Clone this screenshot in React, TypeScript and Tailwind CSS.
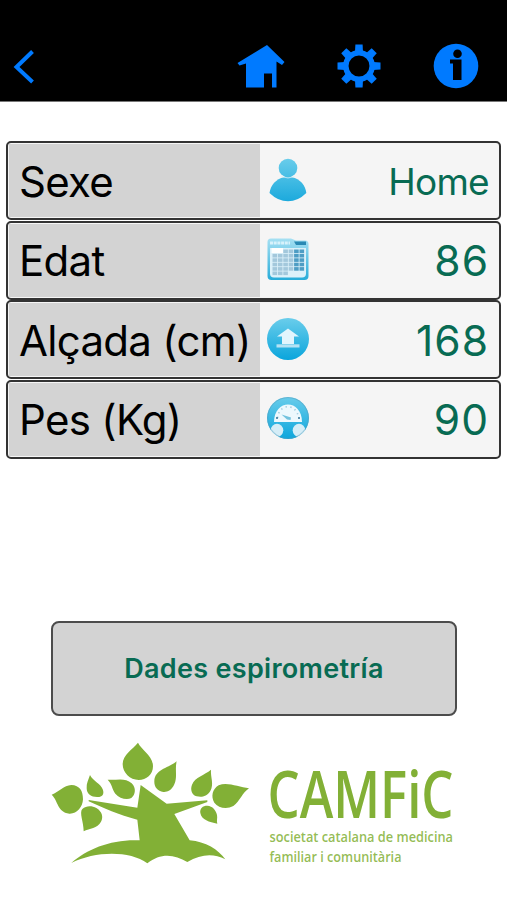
import type { ReactNode } from "react";

function BackIcon() {
  return (
    <svg width="24" height="36" viewBox="0 0 24 36" fill="none" stroke="#007aff" strokeWidth="4">
      <path d="M20.500 3.500 4.500 19l16 15" />
    </svg>
  );
}

function HouseIcon() {
  return (
    <svg width="48" height="44" viewBox="0 0 48 44" fill="#007aff">
      <path d="M30 1 47.500 18 45 21 39.500 17.500V43.500H35V29.500H27V43.500H9V19.500L2.500 21.500.500 19Z" />
    </svg>
  );
}

function GearIcon() {
  return (
    <svg width="44" height="44" viewBox="-22 -22 44 44" fill="#007aff">
      <circle r="13.200" fill="none" stroke="#007aff" strokeWidth="5.500" />
      {[0, 45, 90, 135, 180, 225, 270, 315].map((angle) => (
        <path key={angle} d="M-4-14-3.600-21.500H3.600L4-14Z" transform={`rotate(${angle})`} />
      ))}
    </svg>
  );
}

function InfoIcon() {
  return (
    <svg width="46" height="46" viewBox="0 0 46 46">
      <circle cx="23" cy="23" r="22.300" fill="#007aff" />
      <circle cx="24.500" cy="10.800" r="4.300" />
      <path d="M17 16.500h11.500v20.500h-8.500V20.500h-3Z" />
    </svg>
  );
}

function Shade({ id }: { id: string }) {
  return (
    <defs>
      <linearGradient id={id} x1="0" y1="0" x2="0" y2="1">
        <stop offset="0" stopColor="#6acdeb" />
        <stop offset="1" stopColor="#0aa5dc" />
      </linearGradient>
    </defs>
  );
}

function PersonIcon() {
  return (
    <svg width="42" height="44" viewBox="0 0 42 44">
      <defs>
        <linearGradient id="person" gradientUnits="userSpaceOnUse" x1="0" y1="0" x2="0" y2="44">
          <stop offset="0" stopColor="#6acdeb" />
          <stop offset="1" stopColor="#1ba9dc" />
        </linearGradient>
      </defs>
      <g fill="url(#person)">
        <circle cx="21" cy="10" r="9.300" />
        <path d="M17 19.200H25C33 21 38.500 27 39.300 35Q31 43.300 21 43.300T2.500 35C3.500 27 9 21 17 19.200Z" />
      </g>
      <path d="M14.500 18.500Q21 21.500 27.500 18.500" stroke="#d9f1f9" strokeWidth=".7" fill="none" />
    </svg>
  );
}

function CalendarIcon() {
  const cells: ReactNode[] = [];
  for (let row = 0; row < 6; row++) {
    for (let col = 0; col < 6; col++) {
      if ((row === 0 && col < 2) || (row === 5 && col > 2)) continue;
      cells.push(
        <rect
          key={`${row}-${col}`}
          x={5.5 + col * 5.4}
          y={12.5 + row * 4.4}
          width="4.600"
          height="3.600"
          fill={col > 3 ? "#4e9dc4" : "#a3c8dc"}
        />,
      );
    }
  }
  return (
    <svg width="42" height="44" viewBox="0 0 42 44">
      <defs>
        <linearGradient id="calendar" x1="0" y1="0" x2="0" y2="1">
          <stop offset="0" stopColor="#a6e0f3" />
          <stop offset="1" stopColor="#27acd9" />
        </linearGradient>
      </defs>
      <path d="M4 1.500H24L29 3.500H38Q41.500 3.500 41.500 7V39Q41.500 43 37.500 43H4.500Q.500 43 .500 39V5Q.500 1.500 4 1.500Z" fill="url(#calendar)" />
      <path d="M3 11H39V36.500Q39 40.500 35 40.500H7Q3 40.500 3 36.500Z" fill="#dcf1fa" />
      <path d="M4.500 11H16V16H4.500Z" fill="#fff" />
      <path d="M3 6H23" stroke="#d8f2fb" strokeWidth="3" strokeDasharray="3 .7" />
      <path d="M27 4.500H39V8H29Z" fill="#2989b4" />
      {cells}
    </svg>
  );
}

function HeightIcon() {
  return (
    <svg width="42" height="44" viewBox="0 0 42 44">
      <Shade id="height" />
      <circle cx="21" cy="22" r="21" fill="url(#height)" />
      <path d="M21 11.500 32 19.500H27V27H15V19.500H10Z" fill="#e2f5fd" />
      <path d="M9.500 27.300H32.500V30.500H9.500Z" fill="#b5e2f4" />
    </svg>
  );
}

function ScaleIcon() {
  return (
    <svg width="42" height="44" viewBox="0 0 42 44">
      <Shade id="scale" />
      <clipPath id="scale-disc"><circle cx="21" cy="22" r="21" /></clipPath>
      <g clipPath="url(#scale-disc)">
        <rect width="42" height="44" fill="url(#scale)" />
        <path d="M7 26C7 2.500 35 2.500 35 26Z" fill="#edf8fd" />
        <path d="M10.500 22C12 7 30 7 31.500 22" fill="none" stroke="#9bc8dc" strokeWidth="1.600" strokeDasharray="1.300 3.500" />
        <path d="M14.500 18.500 24 21.500 23.500 24 20 23.500Z" fill="#72c2de" />
        <circle cx="10" cy="22" r="1.100" fill="#3a799d" />
        <circle cx="32" cy="22" r="1.100" fill="#3a799d" />
        <ellipse cx="10" cy="34.300" rx="6.300" ry="6.500" fill="#d5edf7" />
        <ellipse cx="32" cy="34.300" rx="6.300" ry="6.500" fill="#d5edf7" />
      </g>
      <circle cx="21" cy="22" r="20.400" fill="none" stroke="#579ab8" strokeOpacity=".5" />
    </svg>
  );
}

type Field = { label: string; value: string; icon: ReactNode; valueClass: string };

const numberClass = "mr-[-1px] pt-[2px] text-[42.500px] tracking-[1px]";

const fields: Field[] = [
  { label: "Sexe", value: "Home", icon: <PersonIcon />, valueClass: "mr-[-1px] pt-[2px] text-[37px] tracking-[-0.7px]" },
  { label: "Edat", value: "86", icon: <CalendarIcon />, valueClass: numberClass },
  { label: "Alçada (cm)", value: "168", icon: <HeightIcon />, valueClass: numberClass },
  { label: "Pes (Kg)", value: "90", icon: <ScaleIcon />, valueClass: numberClass },
];

function FieldRow({ field }: { field: Field }) {
  return (
    <div className="flex h-[79px] w-[495px] rounded-[5px] border-2 border-[#333] bg-[#f5f5f5] p-px">
      <div className="flex w-[251px] shrink-0 items-center bg-[#d3d3d3] pt-[2px] pl-[10px] text-[42px] leading-none tracking-[-0.7px] whitespace-nowrap text-black">
        {field.label}
      </div>
      <div className="flex flex-1 items-center justify-between pr-[10px] pl-[7px] leading-none text-[#086b53]">
        <div className="-translate-y-px">{field.icon}</div>
        <span className={field.valueClass}>{field.value}</span>
      </div>
    </div>
  );
}

function CamficLogo() {
  return (
    <svg width="507" height="135" viewBox="0 735 507 135" fill="#82b036" className="block" fontFamily="'Open Sans', sans-serif">
      <g transform="translate(40 735) scale(.33333)">
        <path d="M294 23C304 44 339 62 339 94C339 119 319 135 296 135C270 135 248 113 248 88C248 58 277 45 294 23Z" />
        <path d="M410 79C404 103 413 126 403 148C395 166 382 172 370 171C352 169 342 155 343 138C345 103 382 101 410 79Z" />
        <path d="M203 134C233 136 256 127 275 145C289 158 287 180 274 189C261 196 238 191 226 176C216 162 216 147 203 134Z" />
        <path d="M150 120C159 139 183 145 189 165C193 179 186 186 174 186C155 187 140 178 140 160C139 145 145 135 150 120Z" />
        <path d="M35 179C57 171 71 151 94 150C119 151 129 167 129 193C128 216 111 237 88 236C50 230 56 199 35 179Z" />
        <path d="M131 289C131 260 117 233 127 222C139 211 156 212 169 219C186 229 191 246 183 260C172 281 149 279 131 289Z" />
        <path d="M513 104C511 126 523 147 511 168C500 186 484 187 470 184C456 180 450 164 456 149C466 125 493 121 513 104Z" />
        <path d="M627 160C606 174 601 198 580 213C560 224 535 219 523 203C512 185 517 162 536 151C563 140 596 157 627 160Z" />
        <path d="M532 266C508 261 485 255 481 234C479 220 488 212 502 212C518 213 528 226 531 240C533 250 529 257 532 266Z" />
        <path d="M302 150 380 206 502 196V201L403 237 449 316C497 320 535 344 556 373C520 354 483 357 442 381C403 357 361 353 322 385C269 346 165 348 94 384C142 341 216 312 299 316L292 254C237 240 190 219 146 199V195L292 218Z" />
      </g>
      <text x="267.500" y="818" fontSize="65" fontWeight="600" textLength="186" lengthAdjust="spacingAndGlyphs">CAMFiC</text>
      <text x="269.500" y="842" fontSize="15" fontWeight="600" fillOpacity=".85" textLength="183.500" lengthAdjust="spacingAndGlyphs">societat catalana de medicina</text>
      <text x="269.500" y="861.500" fontSize="15" fontWeight="600" fillOpacity=".85" textLength="132" lengthAdjust="spacingAndGlyphs">familiar i comunitària</text>
    </svg>
  );
}

export default function App() {
  return (
    <main className="flex h-[900px] w-[507px] flex-col overflow-hidden bg-white font-['Inter',sans-serif]">
      <header className="flex h-[102px] shrink-0 items-end border-b border-[#777] bg-black pb-[12px]">
        <div className="flex h-[46px] w-full items-center pr-[28px] pl-[12px]">
          <BackIcon />
          <div className="ml-auto flex items-center gap-[52px]">
            <HouseIcon />
            <GearIcon />
            <InfoIcon />
          </div>
        </div>
      </header>
      <section className="mt-[39px] ml-[6px] flex h-[318px] shrink-0 flex-col justify-between">
        {fields.map((field) => <FieldRow key={field.label} field={field} />)}
      </section>
      <button className="mt-[162px] ml-[51px] flex h-[95px] w-[406px] shrink-0 items-center justify-center rounded-[8px] border-2 border-[#4c4c4c] bg-[#d3d3d3] pt-[2px] text-[27px] font-semibold text-[#086b53]">
        <span className="tracking-[0.3px]">Dades espirometría</span>
      </button>
      <footer className="mt-[19px] shrink-0">
        <CamficLogo />
      </footer>
    </main>
  );
}
